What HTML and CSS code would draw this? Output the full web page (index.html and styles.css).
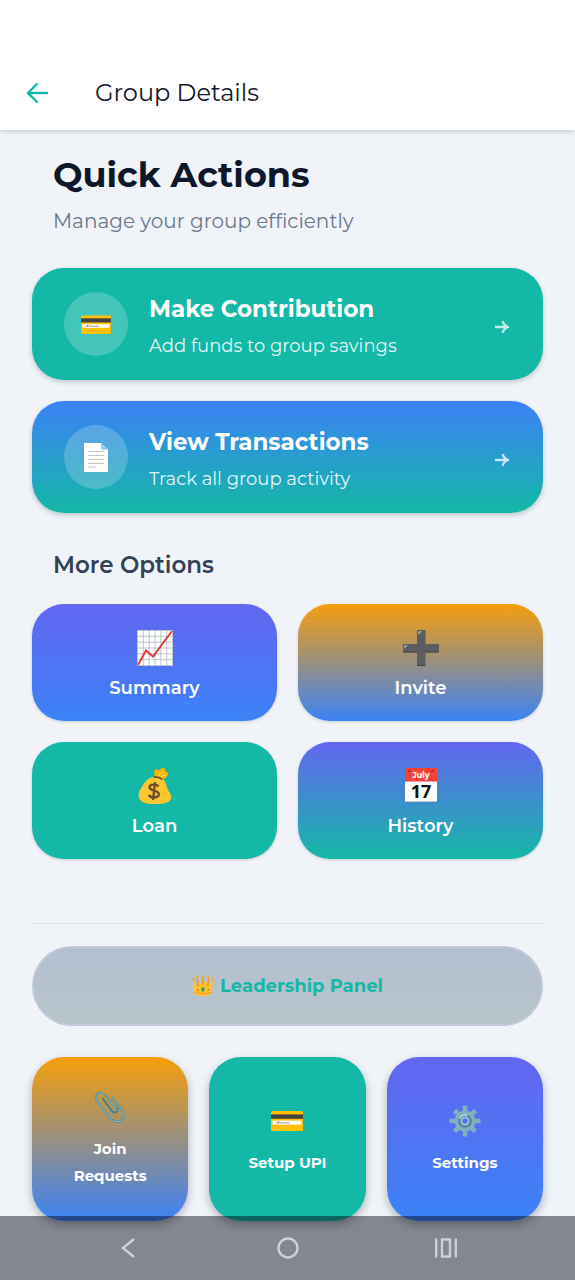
FILE: index.html
```html
<!DOCTYPE html>
<html lang="en">
<head>
<meta charset="utf-8">
<meta name="viewport" content="width=device-width, initial-scale=1">
<title>Group Details</title>
<link rel="stylesheet" href="styles.css">
</head>
<body>
<svg class="sprite" aria-hidden="true">
  <symbol id="card" viewBox="0 0 32 20">
    <rect width="32" height="20" rx="1.5" fill="#ffc107"/>
    <rect y="3.4" width="32" height="4.4" fill="#424242"/>
    <rect x="1.6" y="9.6" width="28.8" height="4" fill="#fff"/>
    <path d="M5 12.500 7 10.500v2l2-1.500 1.500 1.200 2-.8 2 .8 2-.5 2 .5" fill="none" stroke="#6b5a4c" stroke-width=".7"/>
  </symbol>
  <symbol id="arrow" viewBox="0 0 14 14">
    <path d="M0 7h12M7.500 1.200C8.500 4 10 6 13 7c-3 1-4.500 3-5.500 5.800" fill="none" stroke="currentColor" stroke-width="2.300"/>
  </symbol>
</svg>

<header class="topbar">
  <button class="back" type="button" aria-label="Back">
    <svg width="24" height="24" viewBox="0 0 24 24"><path d="M12.500 2.500 3 12l9.500 9.500M3 12h20" fill="none" stroke="#14b8a6" stroke-width="2.400"/></svg>
  </button>
  <h1 class="topbar-title">Group Details</h1>
</header>

<main class="content">
  <section class="intro">
    <h2 class="intro-title">Quick Actions</h2>
    <p class="intro-text">Manage your group efficiently</p>
  </section>

  <section class="actions">
    <button class="action teal" type="button">
      <span class="bubble"><svg width="30" height="19" viewBox="0 0 32 20"><use href="#card"/></svg></span>
      <span class="action-body">
        <span class="action-title">Make Contribution</span>
        <span class="action-text">Add funds to group savings</span>
      </span>
      <svg class="chevron" width="14" height="14"><use href="#arrow"/></svg>
    </button>
    <button class="action blue-teal" type="button">
      <span class="bubble">
        <svg width="24" height="29" viewBox="0 0 24 29">
          <path d="M0 0h17l7 6.500V29H0z" fill="#fff"/>
          <path d="M17 0l7 6.500h-7z" fill="#90caf9"/>
          <path d="M4 8.500h16M4 12.500h16M4 16.500h16M4 20.300h16M4 24h8" stroke="#c3c7cb" stroke-width="1.200"/>
        </svg>
      </span>
      <span class="action-body">
        <span class="action-title">View Transactions</span>
        <span class="action-text">Track all group activity</span>
      </span>
      <svg class="chevron" width="14" height="14"><use href="#arrow"/></svg>
    </button>
  </section>

  <h3 class="more-title">More Options</h3>
  <section class="options">
    <button class="option indigo-blue" type="button">
      <svg width="36" height="36" viewBox="0 0 36 36">
        <path d="M0 0h36v36H0z" fill="#fff"/>
        <path d="M.5 0v36M6.300 0v36M12.200 0v36M18 0v36M23.800 0v36M29.700 0v36M35.500 0v36M0 .5h36M0 6.300h36M0 12.200h36M0 18h36M0 23.800h36M0 29.700h36M0 35.500h36" stroke="#a9b9c1" stroke-width=".8"/>
        <path d="M1 35 9 20.500l7 6L35 1" fill="none" stroke="#e53935" stroke-width="1.900"/>
      </svg>
      <span>Summary</span>
    </button>
    <button class="option amber-blue" type="button">
      <svg width="36" height="36" viewBox="0 0 36 36">
        <path d="M14 0h8.500v14H36v8.500H22.500V36H14V22.500H0V14h14z" fill="#5b5d60"/>
        <path d="M14 35.500h8.500M0 22h14M22.500 22H36" stroke="#46494c"/>
        <path d="M15.300 5V1.300H19zM1.200 19v-3.700h3.700z" fill="#a6abae"/>
      </svg>
      <span>Invite</span>
    </button>
    <button class="option teal" type="button">
      <svg width="36" height="36" viewBox="0 0 36 36">
        <path d="M17.500 9.500c.3-3-.9-6 .2-7.800 1.600-1.500 3 .6 4.200.4C23.500 1.500 25-.6 27 .2c1.300.6.800 2.200 1.900 3 1.100.9 2.600 1.200 2.200 3-.5 2.300-3.800 5.300-6.600 5.500z" fill="#ffb300"/>
        <path d="M22 8c1-3 3-4 5-4M24 9c1-1 3-2 5-2" fill="none" stroke="#ffd54f" stroke-width="1.500"/>
        <path d="M17 9c-4 0-8 3-11 8C3.500 21 .7 25 2 29.500 3.500 35 10 36 18 36s15.500-1 16.300-6c.6-4-2.300-5-3.700-9-1.500-4.500-2-8-5.600-10.500z" fill="#fdc82f"/>
        <path d="M16.500 9.200c3-.6 6.500.4 8.800 2.200" fill="none" stroke="#795548" stroke-width="1.900"/>
        <path d="M21.500 18.500c-1.800-2.600-9.200-2.500-9 .9.300 4 9.500 2.500 9.400 7-.1 3.500-8 4-10.300.6M18.200 14 16 32" fill="none" stroke="#6d4c2f" stroke-width="2.300"/>
      </svg>
      <span>Loan</span>
    </button>
    <button class="option indigo-teal" type="button">
      <svg width="36" height="36" viewBox="0 0 36 36">
        <path d="M2 1h32v33H2z" fill="#fff"/>
        <path d="M2 33.500h32" stroke="#c5c9cc"/>
        <path d="M2 0h32v13.500H2z" fill="#f44336"/>
        <circle cx="6.500" cy="3" r="1.400" fill="#b3302a"/><circle cx="29.500" cy="3" r="1.400" fill="#b3302a"/>
        <text class="cal-month" x="18" y="10" text-anchor="middle">July</text>
        <text class="cal-day" x="18" y="30" text-anchor="middle">17</text>
      </svg>
      <span>History</span>
    </button>
  </section>

  <hr class="divider">

  <button class="leadership" type="button">
    <svg width="22" height="22" viewBox="0 0 22 22">
      <path d="M.8 5 4.600 10.500 5.300 2.500l3.400 7L11 1l2.300 8.500 3.400-7 .7 8L21.200 5 19.500 19.500q-8.500 3.500-17 0z" fill="#fdc02f"/>
      <path d="M5.400 4l.9 7M11 3v6.500M16.600 4l-.9 7" stroke="#f08a3a" stroke-width="1.400"/>
      <path d="M2.500 17.500q8.500 3 17 0" fill="none" stroke="#f29b2c" stroke-width="1"/>
      <ellipse cx="11" cy="14.500" rx="1.700" ry="2.200" fill="#2e9e5b"/>
      <g fill="#f6a821"><circle cx="1.400" cy="4.500" r="1.300"/><circle cx="5.300" cy="2" r="1.300"/><circle cx="11" cy="1.500" r="1.300"/><circle cx="16.700" cy="2" r="1.300"/><circle cx="20.600" cy="4.500" r="1.300"/></g>
      <circle cx="5.800" cy="15" r=".9" fill="#e8663c"/><circle cx="16.200" cy="15" r=".9" fill="#e8663c"/>
    </svg>
    <span>Leadership Panel</span>
  </button>

  <section class="tools">
    <button class="tool amber-blue" type="button">
      <svg width="32" height="32" viewBox="0 0 32 32" fill="none" stroke-linecap="round">
        <path d="M23 20 12.500 5.500C10 2 6 .8 3.500 2.800s-2 5.200.2 8.200l11.800 15.500c3 4 8.500 5.500 12 3s3.500-7 .8-10.500L18 6.500M9 8l8.500 11.500c1.500 2 3.500 2.700 5 1.500s1.300-2.500.5-3.500" stroke="#3d8194" stroke-width="2"/>
        <path d="M23 20 12.500 5.500C10 2 6 .8 3.500 2.800s-2 5.200.2 8.200l11.800 15.500c3 4 8.500 5.500 12 3s3.500-7 .8-10.500L18 6.500" stroke="#8fc3cf"/>
      </svg>
      <span>Join Requests</span>
    </button>
    <button class="tool teal" type="button">
      <svg width="32" height="32" viewBox="0 -6 32 32"><use href="#card" width="32" height="20"/></svg>
      <span>Setup UPI</span>
    </button>
    <button class="tool indigo-blue" type="button">
      <svg width="32" height="32" viewBox="-16 -16 32 32">
        <path d="M0-15.500v31M-15.500 0h31M-10.500-10.500l21 21M10.500-10.500l-21 21" stroke="#82aebe" stroke-width="4.600"/>
        <circle r="10.500" fill="#82aebe"/>
        <circle r="6" fill="#6c9bb0" stroke="#4f8196" stroke-width="1.600"/>
        <path d="M-5.500-2.500A6 6 0 0 1 2.500-5.500" fill="none" stroke="#b7d4dd" stroke-width="1.600"/>
        <circle r="3.300" fill="#526ff5" stroke="#a8cad5" stroke-width="1.200"/>
      </svg>
      <span>Settings</span>
    </button>
  </section>
</main>

<nav class="sysnav" aria-label="System">
  <button type="button" aria-label="Back"><svg width="24" height="24" viewBox="0 0 24 24"><path d="M16 3 5 12l11 9"/></svg></button>
  <button type="button" aria-label="Home"><svg width="24" height="24" viewBox="0 0 24 24"><circle cx="12" cy="12" r="9.500"/></svg></button>
  <button type="button" aria-label="Recent apps"><svg width="24" height="24" viewBox="0 0 24 24"><path d="M2.200 2.500v19M21.800 2.500v19M8 3.500h8v17H8z"/></svg></button>
</nav>
</body>
</html>
```
FILE: styles.css
```css
* { box-sizing: border-box; }

body {
  margin: 0;
  padding-bottom: 59px;
  background: #f0f4f9;
  color: #0f172a;
  font-family: Montserrat, Inter, "Noto Sans", sans-serif;
}

button {
  border: 0;
  margin: 0;
  padding: 0;
  background: none;
  color: inherit;
  font: inherit;
}

svg { flex: none; display: block; }

.sprite {
  position: absolute;
  width: 0;
  height: 0;
}

.topbar {
  display: flex;
  align-items: center;
  gap: 46px;
  padding: 56px 25px 0;
  height: 130px;
  background: #fff;
  box-shadow: 0 1px 5px rgba(40, 60, 60, 0.25);
}

.topbar-title {
  margin: 0;
  font-size: 24px;
  line-height: 32px;
  font-weight: 400;
}

.content { padding: 23px 32px 0; }

.intro {
  padding: 0 21px;
  margin-bottom: 33px;
}

.intro-title {
  margin: 0 0 10px;
  font-size: 35px;
  line-height: 44px;
  font-weight: 700;
}

.intro-text {
  margin: 0;
  color: #6b778a;
  font-size: 20px;
  line-height: 28px;
}

.actions {
  display: grid;
  gap: 21px;
}

.action {
  display: flex;
  align-items: center;
  gap: 21px;
  width: 100%;
  height: 112px;
  padding: 0 34px 0 32px;
  border-radius: 32px;
  color: #fff;
  text-align: left;
  box-shadow: 0 2px 5px rgba(15, 23, 42, 0.22);
}

.bubble {
  display: flex;
  align-items: center;
  justify-content: center;
  flex: none;
  width: 64px;
  height: 64px;
  border-radius: 50%;
  background: rgba(255, 255, 255, 0.2);
}

.action-body {
  display: grid;
  flex: 1;
  gap: 5px;
  padding-top: 7px;
}

.action-title {
  font-size: 23px;
  line-height: 32px;
  font-weight: 700;
}

.action-text {
  font-size: 18px;
  line-height: 32px;
  color: rgba(255, 255, 255, 0.9);
}

.chevron {
  margin-top: 6px;
  color: rgba(255, 255, 255, 0.75);
}

.teal { background: #14b8a6; }
.blue-teal { background: linear-gradient(#3b82f6, #14b8a6); }
.indigo-blue { background: linear-gradient(#6366f1, #3b82f6); }
.amber-blue { background: linear-gradient(#f59e0b, #3b82f6); }
.indigo-teal { background: linear-gradient(#6366f1, #14b8a6); }

.more-title {
  margin: 36px 21px 23px;
  color: #334155;
  font-size: 23px;
  line-height: 32px;
  font-weight: 600;
}

.options {
  display: grid;
  grid-template-columns: 1fr 1fr;
  gap: 21px;
}

.option {
  display: flex;
  flex-direction: column;
  align-items: center;
  justify-content: center;
  gap: 8px;
  height: 117px;
  padding-top: 7px;
  border-radius: 32px;
  color: #fff;
  font-size: 18px;
  line-height: 28px;
  font-weight: 600;
  box-shadow: 0 1px 3px rgba(15, 23, 42, 0.18);
}

.cal-month {
  fill: #fff;
  font-size: 8px;
  font-weight: 700;
}

.cal-day {
  fill: #111;
  font-family: "Noto Sans", sans-serif;
  font-size: 18px;
  font-weight: 700;
}

.divider {
  height: 1px;
  margin: 64px 0 22px;
  border: 0;
  background: #dde3ea;
}

.leadership {
  display: flex;
  align-items: center;
  justify-content: center;
  gap: 6px;
  width: 100%;
  height: 80px;
  margin-bottom: 31px;
  border: 2px solid #c0c9d6;
  border-radius: 40px;
  background: linear-gradient(#b4c0d1, #b7c4ca);
  color: #14b8a6;
  font-size: 18px;
  line-height: 28px;
  font-weight: 700;
}

.tools {
  display: grid;
  grid-template-columns: repeat(3, 1fr);
  gap: 21px;
}

.tool {
  display: flex;
  flex-direction: column;
  align-items: center;
  justify-content: center;
  gap: 12px;
  height: 164px;
  padding: 2px 32px 0;
  border-radius: 32px;
  color: #fff;
  font-size: 15px;
  line-height: 27px;
  font-weight: 700;
  box-shadow: 0 4px 8px rgba(15, 23, 42, 0.3);
}

.sysnav {
  position: fixed;
  right: 0;
  bottom: 0;
  left: 0;
  display: flex;
  align-items: center;
  justify-content: center;
  gap: 134px;
  height: 64px;
  background: rgba(0, 2, 16, 0.45);
}

.sysnav svg {
  fill: none;
  stroke: #cdd1d8;
  stroke-width: 2.400;
}
```
